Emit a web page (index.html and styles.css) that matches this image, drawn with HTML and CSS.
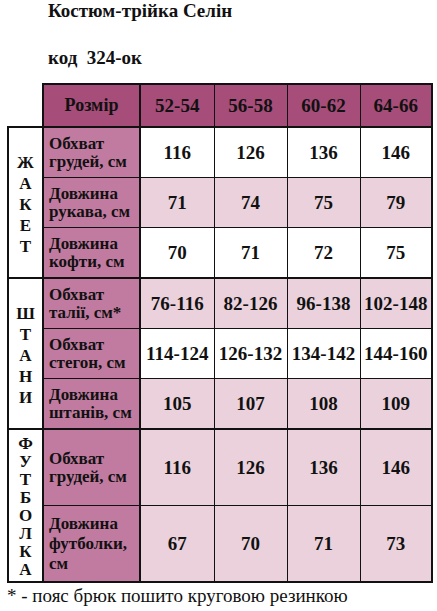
FILE: index.html
```html
<!DOCTYPE html>
<html lang="uk">
<head>
<meta charset="utf-8">
<link rel="stylesheet" href="styles.css">
</head>
<body>
<div class="page">
  <h1 class="title">Костюм-трійка Селін</h1>
  <p class="code">код&nbsp; 324-ок</p>
  <table class="sizes">
    <colgroup>
      <col class="c-cat"><col class="c-label"><col class="c-v1"><col class="c-v2"><col class="c-v3"><col class="c-v4">
    </colgroup>
    <thead>
      <tr class="head">
        <th class="blank"></th>
        <th class="h-label">Розмір</th>
        <th>52-54</th><th>56-58</th><th>60-62</th><th>64-66</th>
      </tr>
    </thead>
    <tbody class="group">
      <tr class="row white">
        <td class="cat cat-wide" rowspan="3">Ж<br>А<br>К<br>Е<br>Т</td>
        <td class="label">Обхват<br>грудей, см</td>
        <td>116</td><td>126</td><td>136</td><td>146</td>
      </tr>
      <tr class="row pink">
        <td class="label">Довжина<br>рукава, см</td>
        <td>71</td><td>74</td><td>75</td><td>79</td>
      </tr>
      <tr class="row white">
        <td class="label">Довжина<br>кофти, см</td>
        <td>70</td><td>71</td><td>72</td><td>75</td>
      </tr>
    </tbody>
    <tbody class="group">
      <tr class="row pink">
        <td class="cat cat-wide" rowspan="3">Ш<br>Т<br>А<br>Н<br>И</td>
        <td class="label">Обхват<br>талії, см*</td>
        <td>76-116</td><td>82-126</td><td>96-138</td><td>102-148</td>
      </tr>
      <tr class="row white">
        <td class="label">Обхват<br>стегон, см</td>
        <td>114-124</td><td>126-132</td><td>134-142</td><td>144-160</td>
      </tr>
      <tr class="row pink">
        <td class="label">Довжина<br>штанів, см</td>
        <td>105</td><td>107</td><td>108</td><td>109</td>
      </tr>
    </tbody>
    <tbody class="group">
      <tr class="row tall pink">
        <td class="cat cat-tight" rowspan="2">Ф<br>У<br>Т<br>Б<br>О<br>Л<br>К<br>А</td>
        <td class="label">Обхват<br>грудей, см</td>
        <td>116</td><td>126</td><td>136</td><td>146</td>
      </tr>
      <tr class="row tall pink">
        <td class="label label-loose">Довжина<br>футболки,<br>см</td>
        <td>67</td><td>70</td><td>71</td><td>73</td>
      </tr>
    </tbody>
  </table>
  <p class="note">* - пояс брюк пошито круговою резинкою</p>
</div>
</body>
</html>
```
FILE: styles.css
```css
html, body {
  margin: 0;
  padding: 0;
  background: #ffffff;
}

.page {
  padding: 0 0 0 7px;
  font-family: "Liberation Serif", "DejaVu Serif", serif;
  color: #111;
}

.title {
  margin: 0;
  padding: 0 0 0 41px;
  font-size: 19px;
  line-height: 22px;
  font-weight: bold;
}

.code {
  margin: 25px 0 0 0;
  padding: 0 0 0 41px;
  font-size: 19px;
  line-height: 22px;
  font-weight: bold;
}

.sizes {
  border-collapse: collapse;
  table-layout: fixed;
  width: 426px;
  margin-top: 14px;
}

.c-cat { width: 35px; }
.c-label { width: 97px; }
.c-v1 { width: 74px; }
.c-v2 { width: 73px; }
.c-v3 { width: 73px; }
.c-v4 { width: 72px; }

.sizes th,
.sizes td {
  padding: 0;
  border: 1px solid #111;
  text-align: center;
  vertical-align: middle;
  font-weight: bold;
}

.head th {
  height: 41px;
  background: #a64d79;
  font-size: 19px;
  border-top: 2px solid #111;
  border-bottom: 2px solid #111;
}

.head th:last-child {
  border-right: 2px solid #111;
}

.head th.h-label {
  border-left: 2px solid #111;
  border-right: 2px solid #111;
  font-size: 18px;
}

.head th.blank {
  background: transparent;
  border: none;
}

.group {
  border: 2px solid #111;
}

.row td {
  height: 49px;
  font-size: 19px;
}

.row.tall td {
  height: 75px;
}

.row td:last-child {
  border-right: 2px solid #111;
}

.white td { background: #ffffff; }
.pink td { background: #ead1dc; }

.sizes td.label {
  background: #c27ba0;
  text-align: left;
  padding-left: 5px;
  font-size: 17px;
  line-height: 18px;
  border-right: 2px solid #111;
  border-left: 2px solid #111;
}

.sizes td.label-loose {
  line-height: 20px;
}

.sizes td.cat {
  background: #ffffff;
  font-size: 17px;
  border-left: 2px solid #111;
}

.sizes td.cat-wide { line-height: 21px; padding-top: 3px; }
.sizes td.cat-tight { line-height: 18px; padding-top: 3px; }

.note {
  margin: 2px 0 0 0;
  font-size: 19px;
  line-height: 22px;
  font-weight: normal;
}
```
